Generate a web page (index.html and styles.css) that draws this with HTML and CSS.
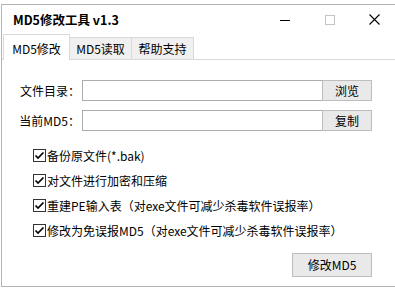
FILE: index.html
```html
<!DOCTYPE html>
<html lang="zh-CN">
<head>
    <meta charset="UTF-8">
    <meta name="viewport" content="width=device-width, initial-scale=1.0">
    <title>MD5修改工具 v1.3</title>
    <link rel="stylesheet" href="styles.css">
</head>
<body>
    <!-- Окно программы -->
    <div class="window">
        <div class="titlebar">
            <span class="title">MD5修改工具 v1.3</span>
            <div class="controls">
                <span class="ctl">
                    <svg width="10" height="10" viewBox="0 0 10 10"><path d="M0 5.5H10" stroke="#000" stroke-width="1"/></svg>
                </span>
                <span class="ctl">
                    <svg width="10" height="10" viewBox="0 0 10 10"><rect x="0.5" y="0.5" width="9" height="9" fill="none" stroke="#c4c4c4" stroke-width="1"/></svg>
                </span>
                <span class="ctl">
                    <svg width="11" height="11" viewBox="0 0 11 11"><path d="M0.5 0.5L10.5 10.5M10.5 0.5L0.5 10.5" stroke="#000" stroke-width="1.1"/></svg>
                </span>
            </div>
        </div>

        <!-- Вкладки -->
        <div class="tabs">
            <div class="tab active">MD5修改</div>
            <div class="tab">MD5读取</div>
            <div class="tab">帮助支持</div>
        </div>

        <div class="panel">
            <div class="fields">
                <label class="field-label">文件目录：</label>
                <input class="field-input" type="text">
                <button class="btn">浏览</button>

                <label class="field-label">当前MD5：</label>
                <input class="field-input" type="text">
                <button class="btn">复制</button>
            </div>

            <div class="checks">
                <label class="check-row"><span class="check-box"><svg width="11" height="11" viewBox="0 0 11 11"><path d="M1.5 5.5L4 8L9.5 2.5" fill="none" stroke="#000" stroke-width="1.7"/></svg></span>备份原文件(*.bak)</label>
                <label class="check-row"><span class="check-box"><svg width="11" height="11" viewBox="0 0 11 11"><path d="M1.5 5.5L4 8L9.5 2.5" fill="none" stroke="#000" stroke-width="1.7"/></svg></span>对文件进行加密和压缩</label>
                <label class="check-row"><span class="check-box"><svg width="11" height="11" viewBox="0 0 11 11"><path d="M1.5 5.5L4 8L9.5 2.5" fill="none" stroke="#000" stroke-width="1.7"/></svg></span>重建PE输入表（对exe文件可减少杀毒软件误报率）</label>
                <label class="check-row"><span class="check-box"><svg width="11" height="11" viewBox="0 0 11 11"><path d="M1.5 5.5L4 8L9.5 2.5" fill="none" stroke="#000" stroke-width="1.7"/></svg></span>修改为免误报MD5（对exe文件可减少杀毒软件误报率）</label>
            </div>

            <div class="actions">
                <button class="btn btn-main">修改MD5</button>
            </div>
        </div>
    </div>
</body>
</html>
```

FILE: styles.css
```css
html {
    overflow: hidden;
}

body {
    margin: 0;
    width: 395px;
    height: 290px;
    overflow: hidden;
    background: #ffffff;
    color: #000000;
    font-family: "Noto Sans CJK SC", "Noto Sans", sans-serif;
    font-size: 12px;
}

/* Окно */
.window {
    margin: 4px 0 0 1px;
    width: 396px;
    height: 283px;
    box-sizing: border-box;
    border: 1px solid #b4b4b4;
    border-right: none;
    display: flex;
    flex-direction: column;
}

.titlebar {
    height: 29px;
    display: flex;
    align-items: center;
    justify-content: space-between;
    flex-shrink: 0;
}

.title {
    padding-left: 11px;
    font-size: 12.5px;
    font-weight: bold;
    line-height: 16px;
}

.controls {
    display: flex;
    height: 100%;
}

.ctl {
    width: 45px;
    display: flex;
    align-items: center;
    justify-content: center;
}

/* Вкладки */
.tabs {
    height: 26px;
    margin-bottom: -1px;
    padding-left: 1px;
    display: flex;
    align-items: flex-end;
    flex-shrink: 0;
}

.tab {
    position: relative;
    width: 63px;
    height: 22px;
    margin-bottom: 1px;
    margin-left: -1px;
    box-sizing: border-box;
    padding-top: 2px;
    border: 1px solid #d9d9d9;
    border-bottom: none;
    background: #f0f0f0;
    text-align: center;
    line-height: 18px;
    white-space: nowrap;
}

.tab.active {
    z-index: 1;
    width: 67px;
    height: 26px;
    margin-bottom: 0;
    margin-left: 0;
    padding-top: 5px;
    background: #ffffff;
}

.panel {
    flex: 1;
    border-top: 1px solid #d9d9d9;
    padding-top: 20px;
}

/* Поля */
.fields {
    display: grid;
    grid-template-columns: 80px 240px 50px;
    grid-auto-rows: 21px;
    row-gap: 9px;
}

.field-label {
    padding-right: 2px;
    text-align: right;
    line-height: 21px;
    white-space: nowrap;
}

.field-input {
    margin: 0;
    height: 21px;
    box-sizing: border-box;
    border: 1px solid #acacac;
    border-right: none;
    background: #ffffff;
    font: inherit;
}

.btn {
    margin: 0;
    padding: 0;
    box-sizing: border-box;
    border: 1px solid #bdbdbd;
    background: #e9e9e9;
    color: #000000;
    font: inherit;
    line-height: 18px;
}

/* Галочки */
.checks {
    margin-top: 12px;
    padding-left: 31px;
}

.check-row {
    height: 25px;
    display: flex;
    align-items: center;
    white-space: nowrap;
}

.check-box {
    width: 13px;
    height: 13px;
    margin-right: 1px;
    box-sizing: border-box;
    border: 1px solid #333333;
    background: #ffffff;
    display: flex;
    align-items: center;
    justify-content: center;
}

.check-box svg {
    flex-shrink: 0;
}

.actions {
    width: 370px;
    margin-top: 10px;
    display: flex;
    justify-content: flex-end;
}

.btn-main {
    width: 80px;
    height: 24px;
}
```
